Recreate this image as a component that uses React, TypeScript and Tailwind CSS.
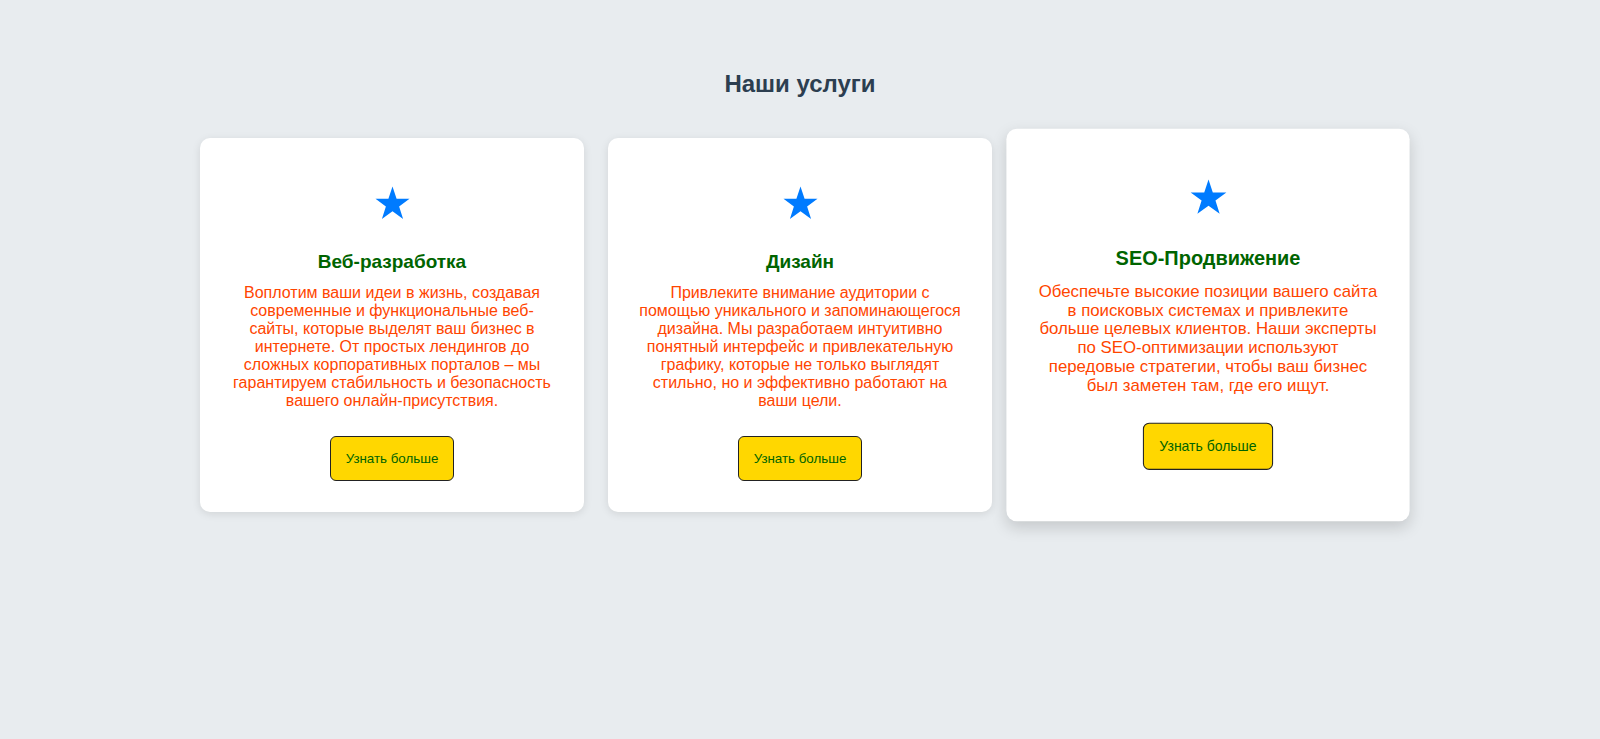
import React from "react";

const Star = () => (
  <svg width="35" height="34" viewBox="0 0 36 34" className="block mx-auto">
    <polygon
      points="18,0 22.2,12.6 35.5,12.7 24.8,20.6 28.9,33.4 18,25.6 7.1,33.4 11.2,20.6 0.5,12.7 13.8,12.6"
      fill="#007bff"
    />
  </svg>
);

type CardProps = { title: string; text: string; scaled?: boolean };

const Card = ({ title, text, scaled }: CardProps) => (
  <div
    className={
      scaled
        ? "bg-white rounded-[10px] px-[30px] pt-[48px] pb-[31px] flex flex-col items-center text-center scale-[1.05] shadow-[0_6px_14px_rgba(0,0,0,0.15)]"
        : "bg-white rounded-[10px] px-[30px] pt-[48px] pb-[31px] flex flex-col items-center text-center shadow-[0_2px_8px_rgba(0,0,0,0.1)]"
    }
  >
    <Star />
    <h3 className="mt-[31px] text-[19px] leading-[22px] font-bold text-[#006400]">{title}</h3>
    <p className="mt-[11px] text-[16px] leading-[18px] text-[#ff4500]">{text}</p>
    <button className="mt-[26px] w-[124px] h-[45px] bg-[#ffd700] border border-[#222] rounded-[6px] text-[13.33px] text-[#006400]">
      Узнать больше
    </button>
  </div>
);

export default function App() {
  return (
    <div
      className="min-h-[739px] w-full bg-[#e8ecef] pt-[70px]"
      style={{ fontFamily: '"Liberation Sans", Arial, sans-serif' }}
    >
      <h2 className="text-center text-[24px] leading-[28px] font-bold text-[#2c3e50]">Наши услуги</h2>
      <div className="mt-[40px] mx-auto w-[1200px] grid grid-cols-3 gap-[24px] items-stretch">
        <Card
          title="Веб-разработка"
          text="Воплотим ваши идеи в жизнь, создавая современные и функциональные веб-сайты, которые выделят ваш бизнес в интернете. От простых лендингов до сложных корпоративных порталов – мы гарантируем стабильность и безопасность вашего онлайн-присутствия."
        />
        <Card
          title="Дизайн"
          text="Привлеките внимание аудитории с помощью уникального и запоминающегося дизайна. Мы разработаем интуитивно понятный интерфейс и привлекательную графику, которые не только выглядят стильно, но и эффективно работают на ваши цели."
        />
        <Card
          scaled
          title="SEO-Продвижение"
          text="Обеспечьте высокие позиции вашего сайта в поисковых системах и привлеките больше целевых клиентов. Наши эксперты по SEO-оптимизации используют передовые стратегии, чтобы ваш бизнес был заметен там, где его ищут."
        />
      </div>
    </div>
  );
}
